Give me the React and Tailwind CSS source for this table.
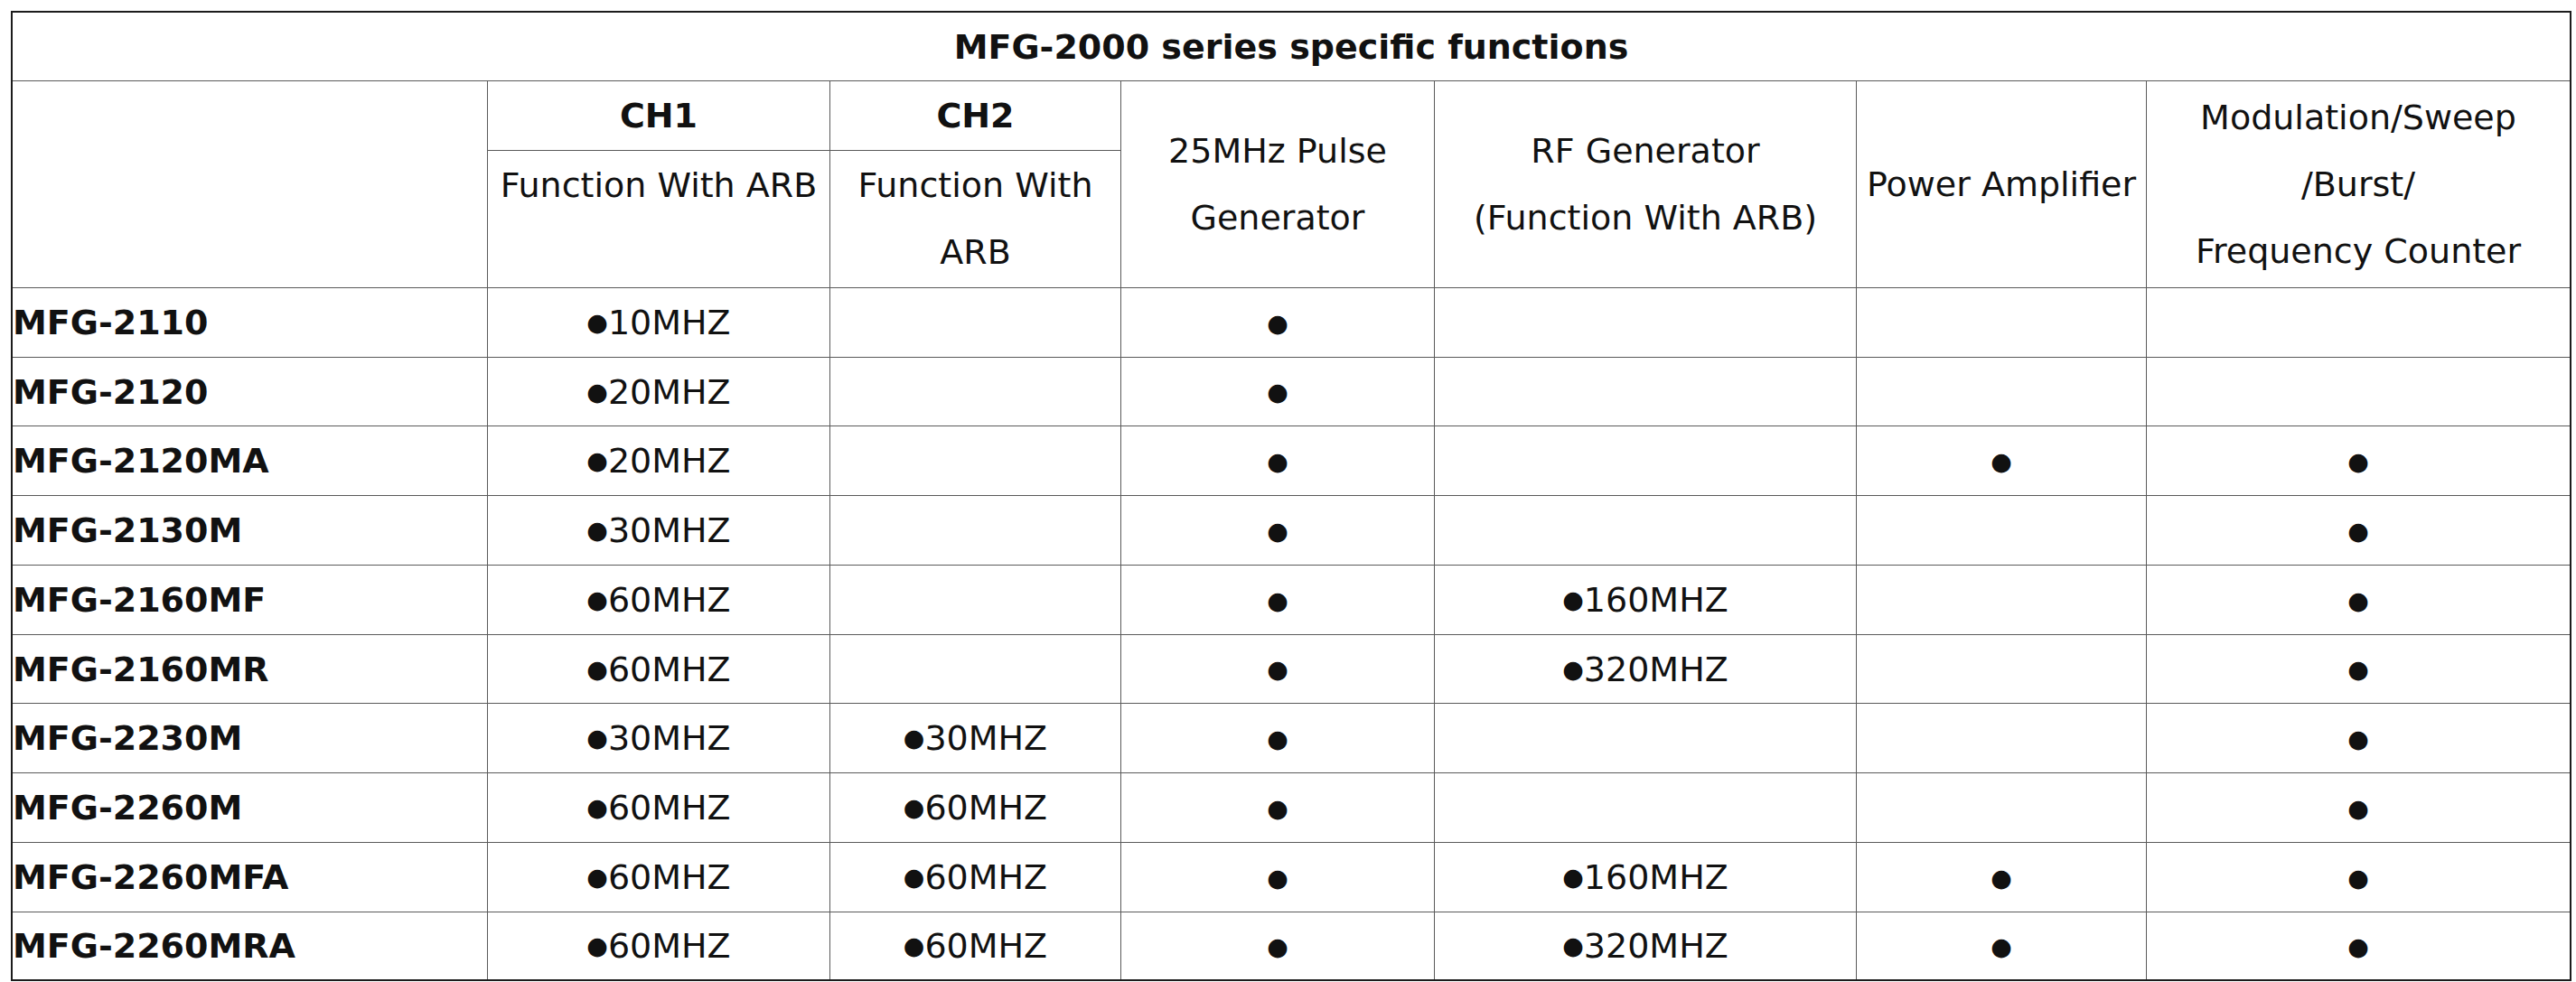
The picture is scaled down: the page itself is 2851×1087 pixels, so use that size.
const rows = [
  { model: "MFG-2110", ch1: "10MHZ", ch2: "", pulse: true, rf: "", amp: false, mod: false },
  { model: "MFG-2120", ch1: "20MHZ", ch2: "", pulse: true, rf: "", amp: false, mod: false },
  { model: "MFG-2120MA", ch1: "20MHZ", ch2: "", pulse: true, rf: "", amp: true, mod: true },
  { model: "MFG-2130M", ch1: "30MHZ", ch2: "", pulse: true, rf: "", amp: false, mod: true },
  { model: "MFG-2160MF", ch1: "60MHZ", ch2: "", pulse: true, rf: "160MHZ", amp: false, mod: true },
  { model: "MFG-2160MR", ch1: "60MHZ", ch2: "", pulse: true, rf: "320MHZ", amp: false, mod: true },
  { model: "MFG-2230M", ch1: "30MHZ", ch2: "30MHZ", pulse: true, rf: "", amp: false, mod: true },
  { model: "MFG-2260M", ch1: "60MHZ", ch2: "60MHZ", pulse: true, rf: "", amp: false, mod: true },
  { model: "MFG-2260MFA", ch1: "60MHZ", ch2: "60MHZ", pulse: true, rf: "160MHZ", amp: true, mod: true },
  { model: "MFG-2260MRA", ch1: "60MHZ", ch2: "60MHZ", pulse: true, rf: "320MHZ", amp: true, mod: true },
];

const Dot = () => <span className="text-[27px] align-[4px] leading-none">●</span>;

const Value = ({ text }) =>
  text ? (
    <span>
      <Dot />
      {text}
    </span>
  ) : null;

const App = () => {
  const line = "border-[#5a5a5a]";
  const mid = `flex items-center justify-center text-center border-r border-b ${line}`;
  const last = `flex items-center justify-center text-center border-b ${line}`;

  return (
    <div className="min-h-screen bg-white pl-[12px] pt-[12px] font-['DejaVu_Sans',Verdana,sans-serif] text-[38px] leading-[74px] text-[#111]">
      <div className="w-[2834px] border-2 border-[#1c1c1c] grid grid-cols-[526px_379px_322px_347px_467px_321px_468px] grid-rows-[76px_77px_152px_77px_76px_77px_77px_77px_76px_77px_77px_77px_74px]">
        <div className={`col-span-7 font-bold ${last}`}>MFG-2000 series specific functions</div>

        <div className={`row-span-2 ${mid}`}></div>
        <div className={`font-bold ${mid}`}>CH1</div>
        <div className={`font-bold ${mid}`}>CH2</div>
        <div className={`row-span-2 ${mid}`}>
          <div>
            25MHz Pulse
            <br />
            Generator
          </div>
        </div>
        <div className={`row-span-2 ${mid}`}>
          <div>
            RF Generator
            <br />
            (Function With ARB)
          </div>
        </div>
        <div className={`row-span-2 ${mid}`}>Power Amplifier</div>
        <div className={`row-span-2 ${last}`}>
          <div>
            Modulation/Sweep
            <br />
            /Burst/
            <br />
            Frequency Counter
          </div>
        </div>

        <div className={`${mid} !items-start pt-[1px]`}>Function With ARB</div>
        <div className={`${mid} !items-start pt-[1px]`}>
          <div>
            Function With
            <br />
            ARB
          </div>
        </div>

        {rows.map((r, i) => {
          const end = i === rows.length - 1;
          const c = end ? "flex items-center justify-center border-r border-[#5a5a5a]" : mid;
          const cl = end ? "flex items-center justify-center" : last;
          return (
            <div key={r.model} className="contents">
              <div className={`${c} !justify-start font-bold`}>{r.model}</div>
              <div className={c}>
                <Value text={r.ch1} />
              </div>
              <div className={c}>
                <Value text={r.ch2} />
              </div>
              <div className={c}>{r.pulse && <Dot />}</div>
              <div className={c}>
                <Value text={r.rf} />
              </div>
              <div className={c}>{r.amp && <Dot />}</div>
              <div className={cl}>{r.mod && <Dot />}</div>
            </div>
          );
        })}
      </div>
    </div>
  );
};

export default App;
